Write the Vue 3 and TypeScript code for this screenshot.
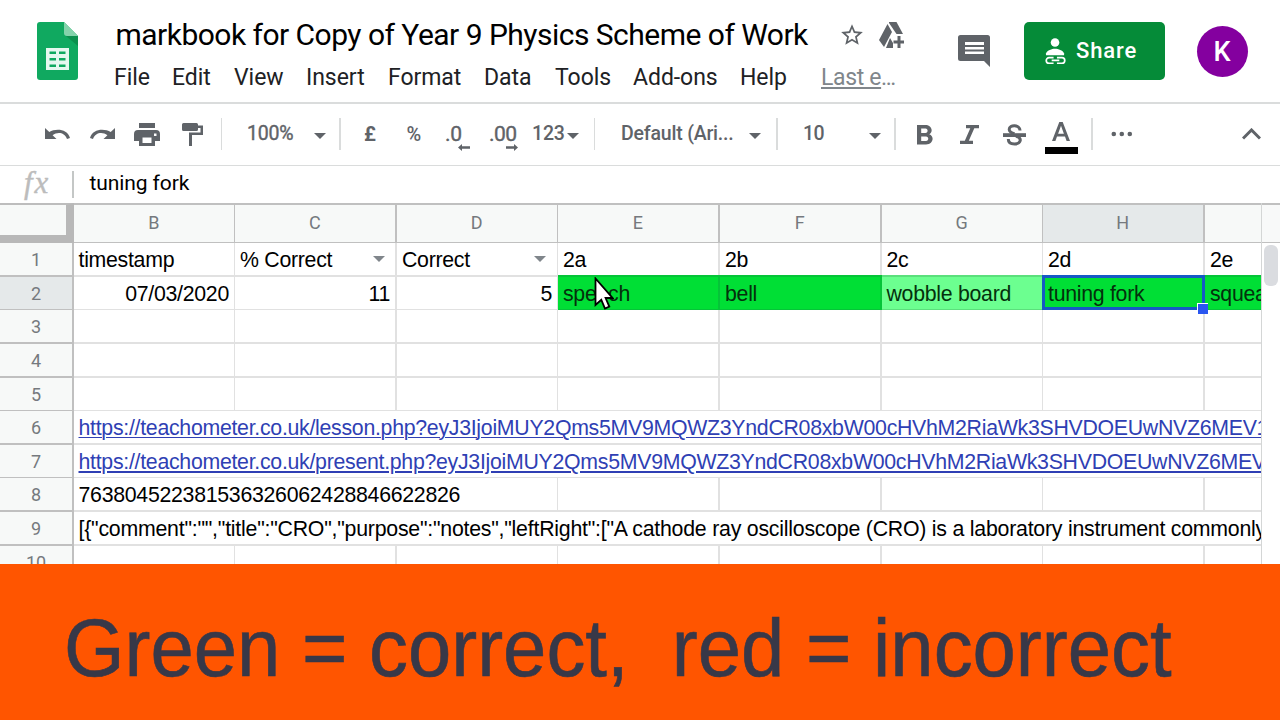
<script setup lang="ts">
interface Cell {
  text?: string
  align?: 'right'
  tone?: 'good' | 'fair'
  filter?: boolean
  selected?: boolean
  spill?: boolean
  link?: boolean
}
interface Row {
  label: string
  cells: Cell[]
}

const menus = ['File', 'Edit', 'View', 'Insert', 'Format', 'Data', 'Tools', 'Add-ons', 'Help']
const columns = ['B', 'C', 'D', 'E', 'F', 'G', 'H', '']

const blank = (): Cell[] => columns.map(() => ({}))
const spill = (text: string, link = false): Cell[] => {
  const cells = blank()
  cells[0] = { text, link, spill: true }
  return cells
}

const token = 'eyJ3IjoiMUY2Qms5MV9MQWZ3YndCR08xbW00cHVhM2RiaWk3SHVDOEUwNVZ6MEV1'

const rows: Row[] = [
  {
    label: '1',
    cells: [
      { text: 'timestamp' },
      { text: '% Correct', filter: true },
      { text: 'Correct', filter: true },
      { text: '2a' },
      { text: '2b' },
      { text: '2c' },
      { text: '2d' },
      { text: '2e' },
    ],
  },
  {
    label: '2',
    cells: [
      { text: '07/03/2020', align: 'right' },
      { text: '11', align: 'right' },
      { text: '5', align: 'right' },
      { text: 'speech', tone: 'good' },
      { text: 'bell', tone: 'good' },
      { text: 'wobble board', tone: 'fair' },
      { text: 'tuning fork', tone: 'good', selected: true },
      { text: 'squeak', tone: 'good' },
    ],
  },
  { label: '3', cells: blank() },
  { label: '4', cells: blank() },
  { label: '5', cells: blank() },
  { label: '6', cells: spill(`https://teachometer.co.uk/lesson.php?${token}`, true) },
  { label: '7', cells: spill(`https://teachometer.co.uk/present.php?${token}`, true) },
  { label: '8', cells: spill('763804522381536326062428846622826') },
  {
    label: '9',
    cells: spill(
      '[{"comment":"","title":"CRO","purpose":"notes","leftRight":["A cathode ray oscilloscope (CRO) is a laboratory instrument commonly',
    ),
  },
  { label: '10', cells: blank() },
]
</script>

<template>
  <div class="screen">
    <header class="top">
      <svg class="logo" viewBox="0 0 41 58">
        <path d="M3 0H27L41 14V55a3 3 0 0 1-3 3H3a3 3 0 0 1-3-3V3a3 3 0 0 1 3-3z" fill="#10a960" />
        <path d="M29 14H41V24z" fill="#0c904e" />
        <path d="M27 0L41 14H30a3 3 0 0 1-3-3z" fill="#84d3ab" />
        <path
          d="M9 26H32V48H9zM12.500 29.500V32H19V29.500zM22 29.500V32H28.500V29.500zM12.500 36V38.500H19V36zM22 36V38.500H28.500V36zM12.500 42.500V45H19V42.500zM22 42.500V45H28.500V42.500z"
          fill="#e6f8ef"
          fill-rule="evenodd"
        />
      </svg>
      <div class="doc">
        <div class="title-row">
          <h1 class="title">markbook for Copy of Year 9 Physics Scheme of Work</h1>
          <svg class="star" viewBox="0 0 24 24">
            <path
              d="M22 9.240l-7.190-.62L12 2 9.190 8.630 2 9.240l5.460 4.730L5.820 21 12 17.270 18.180 21l-1.630-7.030L22 9.240zM12 15.400l-3.760 2.270 1-4.280-3.320-2.880 4.380-.38L12 6.100l1.710 4.040 4.380.38-3.320 2.880 1 4.280L12 15.400z"
            />
          </svg>
          <svg class="drive" viewBox="0 0 25 27">
            <path d="M8.500 2L13 10L5 25L0 18z" />
            <path d="M10 0H17.500L24 12H17.500L10 1z" />
            <path d="M11 16L14 21V26H7z" />
            <path d="M18.500 14H21.500V18.500H25V21.500H21.500V26H18.500V21.500H14.500V18.500H18.500z" />
          </svg>
        </div>
        <nav class="menus">
          <span v-for="m in menus" :key="m" class="menu" :class="'m-' + m.toLowerCase()">{{ m }}</span>
          <span class="last"><u>Last e</u><span class="more">...</span></span>
        </nav>
      </div>
      <svg class="comments" viewBox="0 0 32 32">
        <path
          d="M2.500 0H29.500A2.500 2.500 0 0 1 32 2.500V32L26 26H2.500A2.500 2.500 0 0 1 0 23.500V2.500A2.500 2.500 0 0 1 2.500 0zM7 7V10H26V7zM7 12V14.500H26V12zM7 16.500V19H26V16.500z"
          fill-rule="evenodd"
        />
      </svg>
      <button class="share" type="button">
        <svg class="share-icon" viewBox="0 0 22 28">
          <circle cx="10.500" cy="4.500" r="4.500" fill="#fff" />
          <path d="M1 17.800V16C2.500 12.500 7 11 10.500 11S18.500 12.500 20 16V17.800z" fill="#fff" />
          <path
            d="M9 20.500H4.200a2.900 2.900 0 0 0 0 5.800H9M12.500 20.500H17.800a2.900 2.900 0 0 1 0 5.800H12.500M7 23.400H15"
            fill="none"
            stroke="#fff"
            stroke-width="1.800"
          />
        </svg>
        <span>Share</span>
      </button>
      <div class="avatar">K</div>
    </header>

    <div class="toolbar">
      <svg class="ic undo" viewBox="0 0 25 12">
        <path d="M0 0L4.300 4C10.500 0 22.500 0.500 25 10L22 11C19.500 4.200 12.500 3.700 7.600 7.200L11.500 11H0z" />
      </svg>
      <svg class="ic redo" viewBox="0 0 25 12">
        <path d="M25 0L20.700 4C14.500 0 2.500 0.500 0 10L3 11C5.500 4.200 12.500 3.700 17.400 7.200L13.500 11H25z" />
      </svg>
      <svg class="ic print" viewBox="0 0 26 23">
        <path
          d="M5 0H21V5H5zM4 7H22a4 4 0 0 1 4 4V18H21V23H5V18H0V11a4 4 0 0 1 4-4zM8.500 14.500V20H17.500V14.500zM20 10.500V13H22.500V10.500z"
          fill-rule="evenodd"
        />
      </svg>
      <svg class="ic paint" viewBox="0 0 21 23">
        <path d="M1.500 0H14.500A1.500 1.500 0 0 1 16 1.500V2.500H21V12H10V23H7V9.500H18.500V5H16V6.500A1.500 1.500 0 0 1 14.500 8H1.500A1.500 1.500 0 0 1 0 6.500V1.500A1.500 1.500 0 0 1 1.500 0z" />
      </svg>
      <i class="sep s1"></i>
      <span class="tt zoom">100%</span>
      <i class="caret c1"></i>
      <i class="sep wide s2"></i>
      <span class="tt pound">£</span>
      <span class="tt pct">%</span>
      <span class="tt dec">.0<svg class="arrow a1" viewBox="0 0 12 7"><path d="M0 3.500L4 0V2.300H12V4.700H4V7z" /></svg></span>
      <span class="tt dec2">.00<svg class="arrow a2" viewBox="0 0 12 7"><path d="M12 3.500L8 0V2.300H0V4.700H8V7z" /></svg></span>
      <span class="tt num">123</span>
      <i class="caret c2"></i>
      <i class="sep s3"></i>
      <span class="tt font">Default (Ari...</span>
      <i class="caret c3"></i>
      <i class="sep wide s4"></i>
      <span class="tt size">10</span>
      <i class="caret c4"></i>
      <i class="sep wide s5"></i>
      <svg class="ic bold" viewBox="0 0 16 20">
        <path
          d="M0 0H8.500C15 0 16.500 7 12.300 9.200C18 11.500 16 19.500 9 19.500H0zM4.200 3.500V8H8.500C11.300 8 11.300 3.500 8.500 3.500zM4.200 11.500V16H9C12 16 12 11.500 9 11.500z"
          fill-rule="evenodd"
        />
      </svg>
      <svg class="ic italic" viewBox="0 0 19 19">
        <path d="M6 0H19V3.200H14.300L8.800 15.800H13V19H0V15.800H4.800L10.300 3.200H6z" />
      </svg>
      <svg class="ic strike" viewBox="0 0 23 22">
        <path d="M0 9.200H23V13H0z" />
        <path
          d="M17 6.500C17.200 0.500 6.200 0.300 6.200 5.300C6.200 7.500 8 8.800 11.500 9.800M13 12C20 14.500 17.500 20 11.500 20C7.500 20 5.300 18 5.300 15"
          fill="none"
          stroke="#5f6368"
          stroke-width="3"
        />
      </svg>
      <div class="ink">
        <svg viewBox="0 0 18 19">
          <path
            d="M7.300 0H10.700L18 19H14.600L13 14.600H5L3.400 19H0zM9 3.800L6.100 11.700H11.900z"
            fill-rule="evenodd"
          />
        </svg>
        <i class="swatch"></i>
      </div>
      <i class="sep wide s6"></i>
      <svg class="ic dots" viewBox="0 0 22 6">
        <circle cx="2.800" cy="3" r="2.300" />
        <circle cx="10.800" cy="3" r="2.300" />
        <circle cx="18.800" cy="3" r="2.300" />
      </svg>
      <svg class="ic chev" viewBox="0 0 19 12">
        <path d="M1 10.500L9.500 2L18 10.500" fill="none" stroke="#5f6368" stroke-width="3" />
      </svg>
    </div>

    <div class="formula">
      <span class="fx">fx</span>
      <i class="bar"></i>
      <span class="value">tuning fork</span>
    </div>

    <main class="sheet">
      <div class="grid">
        <div class="line head">
          <div class="corner"></div>
          <div
            v-for="(c, i) in columns"
            :key="i"
            class="col"
            :class="['k' + i, { active: c === 'H' }]"
          >
            {{ c }}
          </div>
        </div>
        <div v-for="r in rows" :key="r.label" class="line" :class="'r' + r.label">
          <div class="rowhead" :class="{ active: r.label === '2' }">{{ r.label }}</div>
          <div
            v-for="(cell, i) in r.cells"
            :key="i"
            class="cell"
            :class="[
              'k' + i,
              cell.tone,
              cell.align,
              { selected: cell.selected, spill: cell.spill, link: cell.link },
            ]"
          >
            <span v-if="cell.text" class="txt">{{ cell.text }}</span>
            <i v-if="cell.filter" class="caret filter"></i>
            <i v-if="cell.selected" class="handle"></i>
          </div>
        </div>
      </div>
      <div class="scroll">
        <div class="scroll-head"></div>
        <div class="thumb"></div>
      </div>
    </main>

    <svg class="cursor" viewBox="0 0 20 34">
      <path
        d="M1.500 1.500V28L7.300 22.800L11 31.500L15.300 29.600L11.600 21H18.500z"
        fill="#fff"
        stroke="#000"
        stroke-width="1.800"
      />
    </svg>

    <footer class="banner"><span>Green = correct,&nbsp; red = incorrect</span></footer>
  </div>
</template>

<style>
body {
  margin: 0;
}
</style>

<style scoped>
.screen {
  position: relative;
  width: 1280px;
  height: 720px;
  overflow: hidden;
  display: flex;
  flex-direction: column;
  background: #fff;
  font-family: Roboto, "Liberation Sans", sans-serif;
  color: #000;
}
svg {
  display: block;
  flex: none;
  fill: #5f6368;
}
i {
  display: block;
  flex: none;
}

.top {
  height: 102px;
  flex: none;
  display: flex;
  border-bottom: 2px solid #dadcdc;
}
.logo {
  width: 41px;
  height: 58px;
  margin: 22px 0 0 37px;
}
.doc {
  width: 790px;
  flex: none;
  margin-left: 36px;
}
.title-row {
  display: flex;
  height: 58px;
}
.title {
  margin: 0 0 0 1.500px;
  width: 727px;
  font-size: 30px;
  line-height: 70px;
  font-weight: 400;
  letter-spacing: -0.520px;
  white-space: nowrap;
}
.star {
  width: 26px;
  height: 26px;
  margin-top: 22px;
  margin-left: -1.500px;
}
.drive {
  width: 25px;
  height: 27px;
  margin: 22px 0 0 14px;
}
.menus {
  display: flex;
  height: 38px;
  font-size: 23px;
  line-height: 39px;
  letter-spacing: -0.050px;
  color: #202124;
  white-space: nowrap;
}
.menu {
  flex: none;
}
.m-file { width: 58px; }
.m-edit { width: 62px; }
.m-view { width: 72px; }
.m-insert { width: 82px; }
.m-format { width: 96px; }
.m-data { width: 71px; }
.m-tools { width: 78px; }
.m-add-ons { width: 107px; }
.m-help { width: 81px; }
.last {
  color: #80868b;
  letter-spacing: -0.350px;
}
.more {
  letter-spacing: -1.500px;
}
.last u {
  text-decoration-thickness: 2px;
  text-underline-offset: 2px;
}
.comments {
  width: 32px;
  height: 32px;
  margin: 35px 0 0 54px;
}
.share {
  width: 141px;
  height: 58px;
  flex: none;
  margin: 22px 0 0 34px;
  padding: 0 0 0 21px;
  border: 0;
  border-radius: 5px;
  background: #058b38;
  display: flex;
  align-items: center;
  gap: 10px;
  color: #fff;
  font: 500 22px/58px Roboto, sans-serif;
  letter-spacing: 0.900px;
}
.share-icon {
  width: 21px;
  height: 27px;
}
.avatar {
  width: 51px;
  height: 51px;
  flex: none;
  margin: 26px 0 0 32px;
  border-radius: 50%;
  background: #84009f;
  color: #fff;
  font-size: 27px;
  font-weight: 500;
  line-height: 53px;
  text-align: center;
  text-indent: -1px;
}

.toolbar {
  height: 61px;
  flex: none;
  display: flex;
  align-items: flex-start;
  border-bottom: 1px solid #dadcdc;
  color: #5f6368;
}
.undo { width: 25px; height: 12px; margin: 24px 0 0 45px; }
.redo { width: 25px; height: 12px; margin: 24px 0 0 20px; }
.print { width: 26px; height: 23px; margin: 19px 0 0 19px; }
.paint { width: 21px; height: 23px; margin: 19px 0 0 22px; }
.sep {
  width: 1px;
  height: 32px;
  margin-top: 14px;
  background: #dadcdc;
}
.wide { width: 2px; }
.s1 { margin-left: 18px; }
.s2 { margin-left: 13px; }
.s3 { margin-left: 15px; }
.s4 { margin-left: 15px; }
.s5 { margin-left: 13px; }
.s6 { margin-left: 13px; }
.tt {
  position: relative;
  flex: none;
  height: 60px;
  line-height: 60px;
  font-size: 20px;
  font-weight: 500;
  white-space: nowrap;
}
.zoom { width: 67px; margin-left: 25px; line-height: 59px; font-size: 19.500px; font-weight: 400; letter-spacing: -0.200px; -webkit-text-stroke: 0.400px #5f6368; }
.pound { width: 43px; margin-left: 23px; font-weight: 700; }
.pct { width: 38px; font-size: 20px; text-indent: -0.500px; }
.dec { width: 44px; font-weight: 400; font-size: 21px; letter-spacing: -0.200px; -webkit-text-stroke: 0.400px #5f6368; }
.dec2 { width: 43px; font-weight: 400; font-size: 21px; letter-spacing: -0.600px; -webkit-text-stroke: 0.400px #5f6368; }
.num { width: 35px; font-size: 19.500px; letter-spacing: -0.200px; }
.font { width: 128px; margin-left: 26px; font-size: 19.500px; letter-spacing: -0.200px; }
.size { width: 66px; margin-left: 25px; line-height: 59px; font-size: 19.500px; letter-spacing: -0.500px; }
.arrow {
  position: absolute;
  width: 12px;
  height: 7px;
  top: 40px;
}
.a1 { left: 13px; }
.a2 { left: 17px; }
.caret {
  width: 12px;
  height: 6px;
  margin-top: 29px;
  background: #5f6368;
  clip-path: polygon(0 0, 100% 0, 50% 100%);
}
.bold { width: 16px; height: 20px; margin: 21px 0 0 21px; }
.italic { width: 19px; height: 19px; margin: 21px 0 0 27px; }
.strike { width: 23px; height: 22px; margin: 20px 0 0 24px; }
.ink {
  width: 33px;
  flex: none;
  margin: 18px 0 0 19px;
}
.ink svg {
  width: 18px;
  height: 19px;
  margin: 0 auto 6px 7px;
}
.swatch {
  height: 7px;
  background: #000;
}
.dots { width: 22px; height: 6px; margin: 27px 0 0 18px; }
.chev { width: 19px; height: 12px; margin: 24px 0 0 109px; }

.formula {
  height: 37px;
  flex: none;
  display: flex;
}
.fx {
  box-sizing: border-box;
  width: 72px;
  padding-left: 24px;
  font: italic 31px/33px "Liberation Serif", serif;
  letter-spacing: 2px;
  color: #bcbcbc;
  -webkit-text-stroke: 0.400px #bcbcbc;
}
.bar {
  width: 2px;
  height: 27px;
  margin-top: 5px;
  background: #c4c7c6;
}
.value {
  margin-left: 15.500px;
  font-size: 21px;
  line-height: 35px;
  letter-spacing: -0.100px;
}

.sheet {
  flex: none;
  height: 361px;
  display: flex;
  overflow: hidden;
}
.grid {
  width: 1261px;
  flex: none;
  overflow: hidden;
  border-right: 1px solid #d4d6d6;
}
.line {
  width: 1366px;
  height: 34px;
  display: flex;
}
.head {
  height: 40px;
}
.corner {
  box-sizing: border-box;
  width: 74px;
  flex: none;
  border-top: 2px solid #bdbdbd;
  border-right: 8px solid #b8b8b8;
  border-bottom: 8px solid #b8b8b8;
  background: #f7f9f8;
}
.col {
  box-sizing: border-box;
  flex: none;
  border-top: 2px solid #c0c0c0;
  border-bottom: 1px solid #c0c0c0;
  border-right: 1px solid #c0c0c0;
  background: #f7f9f8;
  color: #75797e;
  font-size: 18px;
  line-height: 36px;
  text-align: center;
  text-indent: -0.500px;
}
.k0,
.k2,
.k5 {
  width: 161px;
}
.k1,
.k3,
.k4,
.k6,
.k7 {
  width: 162px;
  border-right-width: 2px;
}
.active.col,
.active.rowhead {
  background: #e5e9ea;
}
.rowhead {
  box-sizing: border-box;
  width: 74px;
  flex: none;
  border-right: 2px solid #c0c0c0;
  border-bottom: 2px solid #c0c0c0;
  background: #f7f9f8;
  color: #75797e;
  font-size: 18px;
  line-height: 34px;
  text-align: center;
}
.cell {
  position: relative;
  box-sizing: border-box;
  flex: none;
  display: flex;
  border: 0 solid #e1e1e1;
  border-right-width: 1px;
  border-bottom-width: 2px;
  padding: 0 5px;
  font: 21.300px/35px "Liberation Sans", Arial, sans-serif;
  letter-spacing: -0.280px;
  white-space: nowrap;
}
.k0.cell,
.k5.cell {
  padding-left: 4.500px;
}
.k1.cell,
.k3.cell,
.k4.cell,
.k6.cell {
  border-right-width: 2px;
}
.r2,
.r5,
.r7 {
  height: 33px;
}
.r2 .cell,
.r5 .cell,
.r7 .cell,
.r2 .rowhead,
.r5 .rowhead,
.r7 .rowhead {
  border-bottom-width: 1px;
}
.r9 .cell {
  letter-spacing: -0.225px;
}
.right {
  justify-content: flex-end;
}
.filter {
  position: absolute;
  right: 11px;
  top: -16px;
  background: #80868b;
}
.k1 .filter {
  right: 10px;
}
.cell.good,
.cell.fair {
  background: #00df35;
  border-color: #05c438;
  box-shadow: 0 -2px 0 #05c438;
  color: #04300c;
}
.cell.fair {
  background: #6cff90;
  border-color: #5bdf7c;
  box-shadow: 0 -2px 0 #5bdf7c;
}
.cell.selected {
  z-index: 2;
}
.cell.selected::after {
  content: "";
  position: absolute;
  inset: -2px -2px -1px -1px;
  border: 3px solid #1659c5;
}
.handle {
  position: absolute;
  z-index: 3;
  right: -5px;
  bottom: -5px;
  width: 10px;
  height: 10px;
  background: #2a56f0;
  border: 1px solid #fff;
  border-right: 0;
  border-bottom: 0;
}
.spill {
  z-index: 1;
  overflow: visible;
}
.spill .txt {
  flex: none;
  height: 32px;
  background: #fff;
}
.r6 .txt,
.r7 .txt,
.r9 .txt {
  width: 1290px;
}
.r8 .txt {
  padding-right: 90px;
}
.link .txt {
  color: #2f3fb4;
  text-decoration: underline;
  text-decoration-thickness: 1px;
  text-underline-offset: 2px;
}
.r7 .txt {
  text-decoration-thickness: 2px;
}
.scroll {
  width: 18px;
  background: #fff;
}
.scroll-head {
  height: 37px;
  border-top: 2px solid #c0c0c0;
  border-bottom: 1px solid #c0c0c0;
  background: #f8f9f9;
}
.thumb {
  width: 14px;
  height: 41px;
  margin: 2px 0 0 2px;
  border-radius: 6px;
  background: #dadce0;
}

.cursor {
  position: absolute;
  z-index: 5;
  left: 594px;
  top: 277px;
  width: 20px;
  height: 34px;
}

.banner {
  height: 156px;
  flex: none;
  background: #ff5500;
  color: #383848;
  font: 81px/168px "Liberation Sans", Arial, sans-serif;
  -webkit-text-stroke: 0.600px #383848;
  white-space: nowrap;
}
.banner span {
  display: inline-block;
  margin-left: 64px;
  transform: scaleX(0.961);
  transform-origin: 0 50%;
}
</style>
